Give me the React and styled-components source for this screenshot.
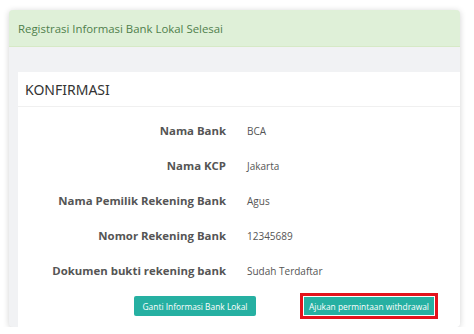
import React from 'react';
import styled, { createGlobalStyle } from 'styled-components';

const GlobalStyle = createGlobalStyle`
    body {
        margin: 0;
        background: #ffffff;
        font-family: "Open Sans", "Noto Sans", sans-serif;
    }
`

const StyledCard = styled.div`
    margin: 10px 0 0 9px;
    width: 451px;
    border-radius: 4px;
    background: #f1f2f4;
    box-shadow: 0 1px 6px rgba(0, 0, 0, 0.18);
    overflow: hidden;
`

const StyledAlert = styled.div`
    height: 37px;
    display: flex;
    align-items: center;
    padding-left: 9px;
    background: #dff0d8;
    color: #4f7f4c;
    font-size: 11.4px;
    border-bottom: 1px solid #d6e9c6;
    box-sizing: border-box;
`

const StyledBody = styled.div`
    padding: 25px 0 0 9px;
`

const StyledPanel = styled.div`
    background: #ffffff;
`

const StyledPanelTitle = styled.h3`
    margin: 0;
    height: 35px;
    display: flex;
    align-items: center;
    padding-left: 7px;
    border-bottom: 1px solid #f0f0f0;
    font-family: "Noto Sans", sans-serif;
    font-weight: 400;
    font-size: 14px;
    color: #333333;
    box-sizing: border-box;
`

const StyledRows = styled.div`
    padding: 6px 0 0 0;
`

const StyledRow = styled.div`
    display: grid;
    grid-template-columns: 208px 1fr;
    column-gap: 21px;
    height: 35px;
    align-items: center;
`

const StyledLabel = styled.div`
    text-align: right;
    font-weight: 700;
    font-size: 11.4px;
    color: #555555;
`

const StyledValue = styled.div`
    font-size: 10px;
    color: #555555;
`

const StyledActions = styled.div`
    display: flex;
    align-items: center;
    gap: 48px;
    padding: 8px 0 11px 116px;
`

const StyledButton = styled.button`
    width: ${p => p.$width}px;
    height: ${p => (p.$highlight ? 18 : 20)}px;
    padding: 0;
    border: none;
    border-radius: ${p => (p.$highlight ? 0 : 2)}px;
    background: #26b0a2;
    color: #ffffff;
    font-family: "Open Sans", sans-serif;
    font-size: 8.4px;
    white-space: nowrap;
    outline: ${p => (p.$highlight ? '3px solid #e3121c' : 'none')};
    outline-offset: 1px;
    cursor: pointer;
`

const rows = [
    ['Nama Bank', 'BCA'],
    ['Nama KCP', 'Jakarta'],
    ['Nama Pemilik Rekening Bank', 'Agus'],
    ['Nomor Rekening Bank', '12345689'],
    ['Dokumen bukti rekening bank', 'Sudah Terdaftar'],
]

const App = () => {
    return (
        <>
            <GlobalStyle />
            <StyledCard>
                <StyledAlert>Registrasi Informasi Bank Lokal Selesai</StyledAlert>
                <StyledBody>
                    <StyledPanel>
                        <StyledPanelTitle>KONFIRMASI</StyledPanelTitle>
                        <StyledRows>
                            {rows.map(([label, value]) => (
                                <StyledRow key={label}>
                                    <StyledLabel>{label}</StyledLabel>
                                    <StyledValue>{value}</StyledValue>
                                </StyledRow>
                            ))}
                        </StyledRows>
                        <StyledActions>
                            <StyledButton $width={122}>Ganti Informasi Bank Lokal</StyledButton>
                            <StyledButton $width={130} $highlight>Ajukan permintaan withdrawal</StyledButton>
                        </StyledActions>
                    </StyledPanel>
                </StyledBody>
            </StyledCard>
        </>
    )
}

export default App;
